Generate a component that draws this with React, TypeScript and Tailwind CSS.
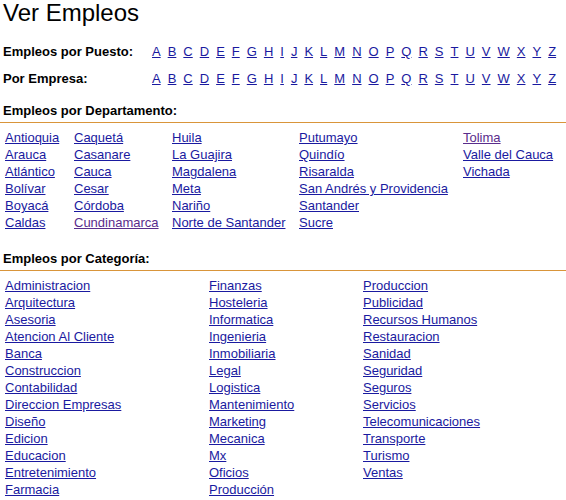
import React from "react";

const LINK = "text-[#1a1aa0] underline";
const VISITED = "text-[#5a2d8c] underline";

const letters = "ABCDEFGHIJKLMNOPQRSTUVWXYZ".split("");

const deptCols: string[][] = [
  ["Antioquia", "Arauca", "Atlántico", "Bolívar", "Boyacá", "Caldas"],
  ["Caquetá", "Casanare", "Cauca", "Cesar", "Córdoba", "Cundinamarca"],
  ["Huila", "La Guajira", "Magdalena", "Meta", "Nariño", "Norte de Santander"],
  ["Putumayo", "Quindío", "Risaralda", "San Andrés y Providencia", "Santander", "Sucre"],
  ["Tolima", "Valle del Cauca", "Vichada"],
];
const visited = new Set(["Cundinamarca", "Tolima"]);

const catCols: string[][] = [
  ["Administracion", "Arquitectura", "Asesoria", "Atencion Al Cliente", "Banca", "Construccion", "Contabilidad", "Direccion Empresas", "Diseño", "Edicion", "Educacion", "Entretenimiento", "Farmacia"],
  ["Finanzas", "Hosteleria", "Informatica", "Ingenieria", "Inmobiliaria", "Legal", "Logistica", "Mantenimiento", "Marketing", "Mecanica", "Mx", "Oficios", "Producción"],
  ["Produccion", "Publicidad", "Recursos Humanos", "Restauracion", "Sanidad", "Seguridad", "Seguros", "Servicios", "Telecomunicaciones", "Transporte", "Turismo", "Ventas"],
];

function LetterRow({ label, className }: { label: string; className?: string }) {
  return (
    <div className={"flex leading-[17px] " + (className ?? "")}>
      <div className="w-[152px] pl-[3px] font-bold">{label}</div>
      <div className="flex gap-[7px]">
        {letters.map((l) => (
          <a key={l} href="#" className={LINK}>
            {l}
          </a>
        ))}
      </div>
    </div>
  );
}

export default function App() {
  return (
    <div
      className="w-[566px] h-[500px] overflow-hidden bg-white text-black text-[13px]"
      style={{ fontFamily: '"Liberation Sans", Arial, sans-serif' }}
    >
      <h1 className="text-[24px] leading-[26px] pl-[3px] font-normal">Ver Empleos</h1>
      <LetterRow label="Empleos por Puesto:" className="mt-[17px]" />
      <LetterRow label="Por Empresa:" className="mt-[10px]" />

      <div className="mt-[15px] pl-[3px] pb-[3px] leading-[17px] font-bold border-b border-[#d9953a]">
        Empleos por Departamento:
      </div>
      <div className="mt-[6px] pl-[5px] grid grid-cols-[69px_98px_127px_164px_auto] leading-[17px]">
        {deptCols.map((col, i) => (
          <div key={i} className="flex flex-col items-start">
            {col.map((d) => (
              <a key={d} href="#" className={visited.has(d) ? VISITED : LINK}>
                {d}
              </a>
            ))}
          </div>
        ))}
      </div>

      <div className="mt-[19px] pl-[3px] pb-[3px] leading-[17px] font-bold border-b border-[#d9953a]">
        Empleos por Categoría:
      </div>
      <div className="mt-[6px] pl-[5px] grid grid-cols-[204px_154px_auto] leading-[17px]">
        {catCols.map((col, i) => (
          <div key={i} className="flex flex-col items-start">
            {col.map((c) => (
              <a key={c} href="#" className={LINK}>
                {c}
              </a>
            ))}
          </div>
        ))}
      </div>
    </div>
  );
}
